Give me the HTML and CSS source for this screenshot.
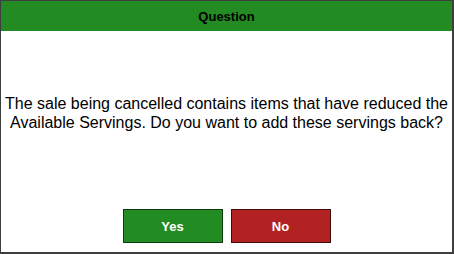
FILE: index.html
```html
<!DOCTYPE html>
<html>
<head>
<meta charset="utf-8">
<link rel="stylesheet" href="styles.css">
</head>
<body>
<div class="dialog">
  <div class="header">Question</div>
  <div class="body">
    <p class="message">The sale being cancelled contains items that have reduced the Available Servings. Do you want to add these servings back?</p>
    <div class="actions">
      <button class="btn btn-yes">Yes</button>
      <button class="btn btn-no">No</button>
    </div>
  </div>
</div>
</body>
</html>
```
FILE: styles.css
```css
html, body {
  margin: 0;
  padding: 0;
  background: #ffffff;
}
.dialog {
  width: 454px;
  height: 254px;
  box-sizing: border-box;
  border-style: solid;
  border-color: #3e3e3e;
  border-width: 1px 2px 2px 1px;
  display: flex;
  flex-direction: column;
  font-family: "Liberation Sans", Arial, sans-serif;
  background: #ffffff;
}
.header {
  height: 30px;
  background: #228b22;
  color: #000000;
  font-weight: bold;
  font-size: 13px;
  display: flex;
  align-items: center;
  justify-content: center;
}
.body {
  flex: 1;
  display: flex;
  flex-direction: column;
  align-items: center;
}
.message {
  margin: 63px 0 0 0;
  font-size: 16px;
  line-height: 19px;
  text-align: center;
  color: #000000;
}
.actions {
  margin-top: auto;
  margin-bottom: 9px;
  display: flex;
  gap: 8px;
}
.btn {
  width: 100px;
  height: 34px;
  box-sizing: border-box;
  border: 1px solid #0d3a0d;
  color: #ffffff;
  font-family: "Liberation Sans", Arial, sans-serif;
  font-weight: bold;
  font-size: 13px;
  padding: 0;
}
.btn-yes {
  background: #228b22;
  border-color: #0e3a0e;
}
.btn-no {
  background: #b22222;
  border-color: #3e0c0c;
}
```
